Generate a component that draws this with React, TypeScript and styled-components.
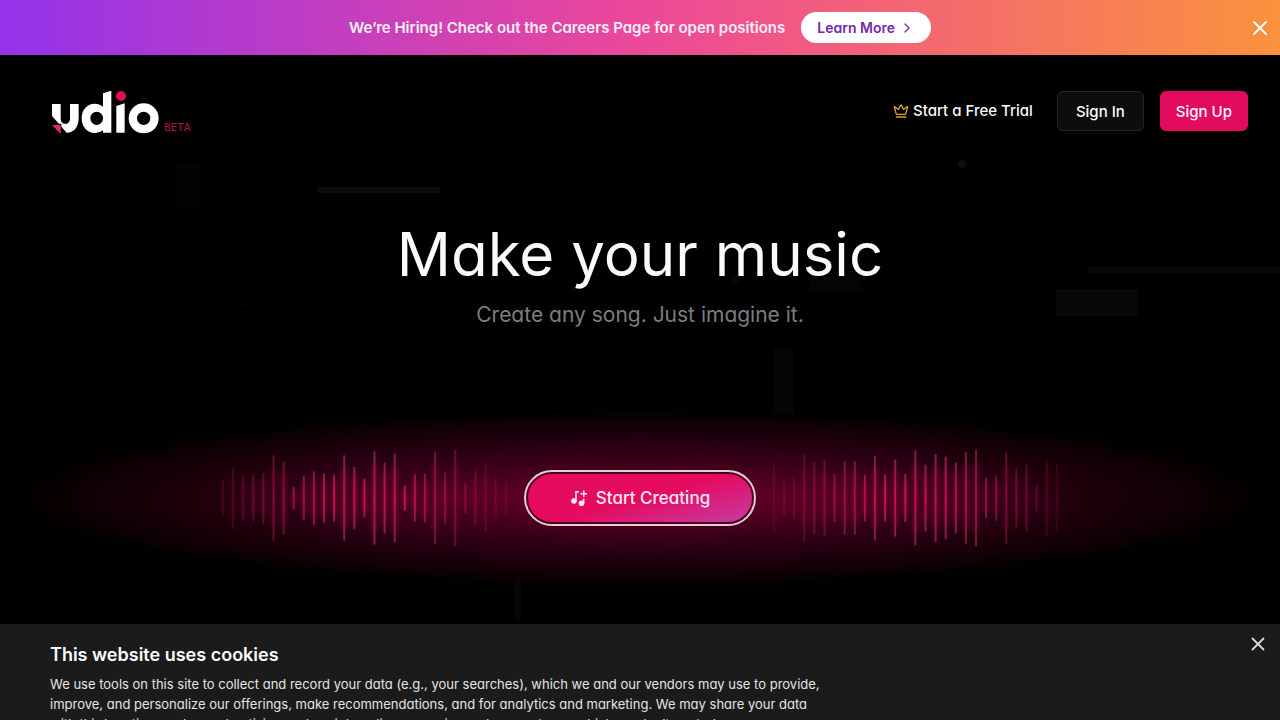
import React, { useState } from "react";
import styled, { createGlobalStyle } from "styled-components";
import { ChevronRight, Crown, X } from "lucide-react";

const GlobalStyle = createGlobalStyle`
  * { box-sizing: border-box; }
  body {
    margin: 0;
    background: #000;
    color: #fafafa;
    font-family: Inter, "Liberation Sans", sans-serif;
    font-feature-settings: "cv11";
  }
  button { font: inherit; font-feature-settings: inherit; cursor: pointer; }
`;

const Page = styled.div`
  position: relative;
  min-height: 100vh;
  overflow: hidden;
`;

const Banner = styled.aside`
  position: relative;
  display: flex;
  align-items: center;
  justify-content: center;
  gap: 16px;
  padding: 12px 48px;
  background: linear-gradient(90deg, #9333ea, #ec4899 50%, #fb923c);
`;

const BannerText = styled.p`
  margin: 0;
  font-size: 15px;
  line-height: 20px;
  font-weight: 600;
  color: #ffeefa;
`;

const BannerLink = styled.a`
  display: flex;
  align-items: center;
  gap: 4px;
  height: 31px;
  padding: 0 16px;
  border-radius: 16px;
  background: #fff;
  color: #7428b4;
  font-size: 14px;
  font-weight: 600;
  text-decoration: none;
`;

const CloseButton = styled.button<{ $top: number; $right: number; $color: string }>`
  position: absolute;
  top: ${(p) => p.$top}px;
  right: ${(p) => p.$right}px;
  display: flex;
  padding: 0;
  border: 0;
  background: none;
  color: ${(p) => p.$color};
`;

const Backdrop = styled.svg`
  position: absolute;
  top: 0;
  left: 0;
  width: 100%;
  height: 720px;
  pointer-events: none;
`;

const Header = styled.header`
  position: relative;
  display: flex;
  align-items: flex-start;
  justify-content: space-between;
  padding: 36px 32px 0 52px;
`;

const Brand = styled.a`
  display: flex;
  align-items: flex-end;
  gap: 4px;
  text-decoration: none;
`;

const Beta = styled.span`
  color: #b50f4c;
  font-family: "DejaVu Sans Mono", monospace;
  font-size: 11px;
  line-height: 14px;
`;

const Nav = styled.nav`
  display: flex;
  align-items: center;
  gap: 16px;
`;

const TrialLink = styled.a`
  display: flex;
  align-items: center;
  gap: 4px;
  margin-right: 8px;
  color: #fafafa;
  font-size: 15px;
  line-height: 20px;
  font-weight: 500;
  text-decoration: none;
`;

const NavButton = styled.button<{ $primary?: boolean }>`
  min-width: 87px;
  height: 40px;
  padding: 0 15px;
  border: 1px solid ${(p) => (p.$primary ? "#e30b5d" : "#262626")};
  border-radius: 6px;
  background: ${(p) => (p.$primary ? "#e30b5d" : "#0d0d0d")};
  color: #fafafa;
  font-size: 15px;
  font-weight: 500;
`;

const Hero = styled.main`
  position: relative;
  display: flex;
  flex-direction: column;
  align-items: center;
  padding-top: 83px;
  text-align: center;
`;

const Title = styled.h1`
  margin: 0;
  font-size: 60px;
  line-height: 72px;
  font-weight: 400;
`;

const Subtitle = styled.p`
  margin: 11px 0 0;
  color: #7d7d7d;
  font-size: 21px;
  line-height: 28px;
`;

const Stage = styled.section`
  display: flex;
  align-items: center;
  justify-content: center;
  gap: 16px;
  width: 100%;
  height: 180px;
  margin-top: 79px;
  background: radial-gradient(
    closest-side,
    #6c002a 0%,
    #580022 20%,
    #3a0018 42%,
    #22000e 66%,
    #0f0006 86%,
    transparent 98%
  );
`;

const WaveSvg = styled.svg`
  flex: none;
  width: 300px;
  height: 120px;
`;

const CreateButton = styled.button`
  display: flex;
  flex: none;
  align-items: center;
  justify-content: center;
  gap: 8px;
  width: 224px;
  height: 48px;
  margin: 4px;
  border: 0;
  border-radius: 24px;
  outline: 2px solid #e8ccd8;
  outline-offset: 2px;
  background: linear-gradient(165deg, #e50b5f 50%, #c8379e 95%);
  color: #ffe6f2;
  font-size: 17px;
  font-weight: 500;
`;

const CookiePanel = styled.section`
  position: fixed;
  right: 0;
  bottom: 0;
  left: 0;
  height: 96px;
  overflow: hidden;
  padding: 18px 50px 0;
  background: #1b1b1b;
`;

const CookieTitle = styled.h2`
  margin: 0;
  font-size: 18px;
  line-height: 26px;
  font-weight: 600;
`;

const CookieText = styled.p`
  max-width: 772px;
  margin: 6px 0 0;
  color: #e4e4e4;
  font-size: 13px;
  line-height: 20px;
`;

const leftBars = [
  55, 92, 70, 70, 75, 128, 108, 34, 66, 80, 74, 70, 128, 93, 58, 140, 106, 133, 38, 71, 73, 138, 77,
  145, 45, 82, 104, 60, 52,
];
const rightBars = [
  104, 55, 60, 130, 108, 112, 72, 110, 110, 70, 127, 70, 116, 72, 142, 100, 132, 124, 106, 137, 145,
  60, 68, 137, 88, 100, 40, 112, 104,
];

function Wave({ id, bars, start, peak }: { id: string; bars: number[]; start: number; peak: number }) {
  return (
    <WaveSvg viewBox="0 0 300 120" aria-hidden="true">
      <defs>
        <linearGradient id={id} x1="0" y1="10" x2="0" y2="110" gradientUnits="userSpaceOnUse">
          <stop offset="0" stopColor="#8a2148" />
          <stop offset="0.25" stopColor="#a01c4c" />
          <stop offset="0.5" stopColor="#d8105a" />
          <stop offset="0.75" stopColor="#a01c4c" />
          <stop offset="1" stopColor="#8a2148" />
        </linearGradient>
        <filter id={`${id}-glow`} x="-100%" y="-20%" width="300%" height="140%">
          <feGaussianBlur stdDeviation="2" />
        </filter>
      </defs>
      {bars.map((bar, i) => {
        const distance = Math.abs(i - peak) / 15;
        const opacity = Math.max(0.12, Math.min(0.9, 1.12 - distance));
        const half = bar / 3;
        const x = start + i * 10.1;
        return (
          <g key={i} opacity={opacity}>
            <rect x={x - 2} y={60 - half * 0.7} width="6" height={half * 1.4} fill="#b00040" opacity="0.45" filter={`url(#${id}-glow)`} />
            <rect x={x} y={60 - half} width="2" height={half * 2} fill={`url(#${id})`} />
          </g>
        );
      })}
    </WaveSvg>
  );
}

function Logo() {
  return (
    <svg width="108" height="44" viewBox="66 33 324 132" role="img" aria-label="Udio">
      <g fill="#fff">
        <path d="M66 72H92V113C92 125 97 131 106 131C115 131 120 125 120 113V72H146V113C146 142 131 158 110 158L66 108Z" />
        <path fillRule="evenodd" d="M219 40L244 32V158H219V151C211 157 202 159 194 159C171 159 155 140 155 115C155 90 171 71 194 71C203 71 212 74 219 80ZM200 95A19 20 0 1 0 200 135A19 20 0 1 0 200 95Z" />
        <path d="M259 78L284 70V158H259Z" />
        <path fillRule="evenodd" d="M341 70A45 45 0 1 0 341 160A45 45 0 1 0 341 70ZM341 95A20 20 0 1 1 341 135A20 20 0 1 1 341 95Z" />
      </g>
      <circle cx="273" cy="48" r="15" fill="#e30b5d" />
      <path d="M64 131H94V163Z" fill="#000" />
      <path d="M66 135H92V162Z" fill="#d8315f" />
    </svg>
  );
}

function NotesIcon() {
  return (
    <svg width="18" height="18" viewBox="0 0 18 18" fill="none" stroke="currentColor" strokeWidth="1.6" aria-hidden="true">
      <circle cx="4" cy="12" r="2.8" fill="currentColor" stroke="none" />
      <circle cx="11.5" cy="14.2" r="2.8" fill="currentColor" stroke="none" />
      <path d="M6 12V2.8H9M13.6 14V9.8M10.5 4.8H17M13.8 1.5V8" />
    </svg>
  );
}

export default function App() {
  const [bannerOpen, setBannerOpen] = useState(true);
  const [cookiesOpen, setCookiesOpen] = useState(true);

  return (
    <Page>
      <GlobalStyle />
      <Backdrop viewBox="0 0 1280 720" preserveAspectRatio="xMidYMin slice" aria-hidden="true">
        <g fill="#060606">
          <rect x="176" y="163" width="24" height="45" fill="#030303" />
          <rect x="317" y="187" width="123" height="6" fill="#0c0c0c" />
          <circle cx="962" cy="164" r="4" fill="#0d0d0d" />
          <circle cx="245" cy="305" r="3" fill="#040404" />
          <circle cx="735" cy="280" r="4" />
          <rect x="810" y="272" width="51" height="20" fill="#040404" />
          <rect x="1088" y="267" width="192" height="6" fill="#080808" />
          <rect x="1056" y="289" width="82" height="27" fill="#080808" />
          <rect x="773" y="348" width="21" height="66" fill="#050505" />
          <rect x="515" y="550" width="6" height="72" />
        </g>
      </Backdrop>
      {bannerOpen && (
        <Banner>
          <BannerText>We’re Hiring! Check out the Careers Page for open positions</BannerText>
          <BannerLink href="#careers">
            Learn More <ChevronRight size={16} />
          </BannerLink>
          <CloseButton $top={16} $right={8} $color="#fff" aria-label="Dismiss" onClick={() => setBannerOpen(false)}>
            <X size={24} />
          </CloseButton>
        </Banner>
      )}
      <Header>
        <Brand href="#home">
          <Logo />
          <Beta>BETA</Beta>
        </Brand>
        <Nav>
          <TrialLink href="#trial">
            <Crown size={16} color="#d9a520" />
            Start a Free Trial
          </TrialLink>
          <NavButton>Sign In</NavButton>
          <NavButton $primary>Sign Up</NavButton>
        </Nav>
      </Header>
      <Hero>
        <Title>Make your music</Title>
        <Subtitle>Create any song. Just imagine it.</Subtitle>
        <Stage>
          <Wave id="wave-left" bars={leftBars} start={14} peak={14} />
          <CreateButton>
            <NotesIcon />
            Start Creating
          </CreateButton>
          <Wave id="wave-right" bars={rightBars} start={1} peak={14} />
        </Stage>
      </Hero>
      {cookiesOpen && (
        <CookiePanel aria-label="Cookie notice">
          <CookieTitle>This website uses cookies</CookieTitle>
          <CookieText>
            We use tools on this site to collect and record your data (e.g., your searches), which we and our vendors may use to provide,
            improve, and personalize our offerings, make recommendations, and for analytics and marketing. We may share your data
            with third parties, such as advertising and social media companies and our partners, which we don’t control.
          </CookieText>
          <CloseButton $top={9} $right={11} $color="#d8d8d8" aria-label="Close" onClick={() => setCookiesOpen(false)}>
            <X size={22} />
          </CloseButton>
        </CookiePanel>
      )}
    </Page>
  );
}
